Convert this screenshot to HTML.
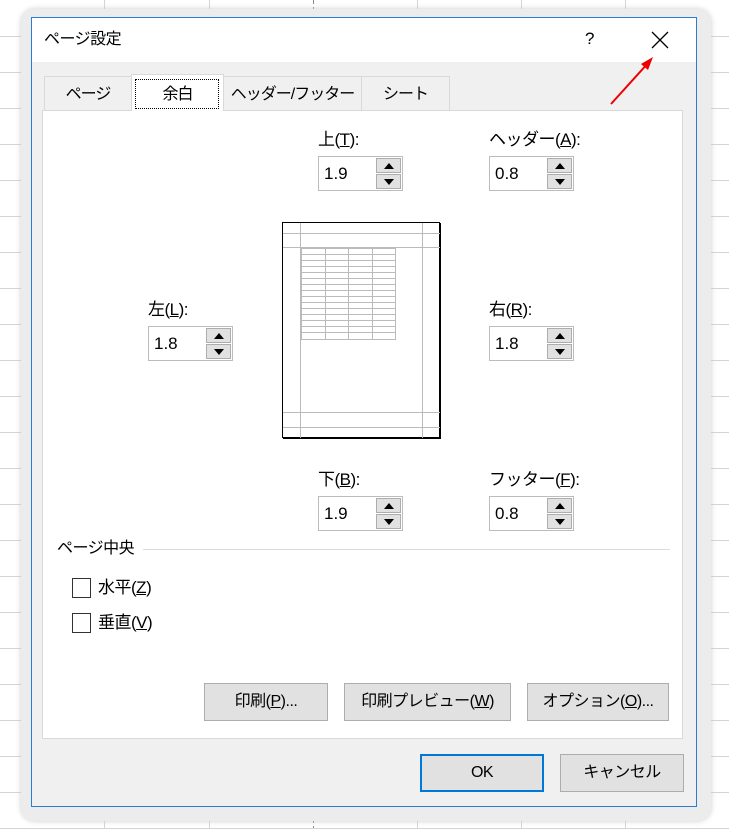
<!DOCTYPE html>
<html><head><meta charset="utf-8"><style>
*{margin:0;padding:0;box-sizing:border-box}
body{width:729px;height:829px;position:relative;overflow:hidden;background:#fff;font-family:"Liberation Sans","Noto Sans CJK JP",sans-serif;font-size:15px;color:#000}
.a{position:absolute}
.vl{position:absolute;top:0;width:1px;height:829px;background:#d4d4d4}
.hl{position:absolute;left:0;height:1px;width:729px;background:#d4d4d4}
.t{position:absolute;white-space:nowrap;line-height:1;letter-spacing:-0.5px}
.inp{position:absolute;width:85px;height:35px;border:1px solid #bcbcbc;background:#fff}
.inp span{position:absolute;left:5px;top:7px;font-size:17px}
.sp{position:absolute;right:1px;width:25px;height:15px;background:#e1e1e1;border:1px solid #adadad}
.sp.u{top:1px}.sp.d{bottom:1px}
.sp i{position:absolute;left:7px;width:0;height:0;border-left:5px solid transparent;border-right:5px solid transparent}
.sp.u i{top:4px;border-bottom:6px solid #000}
.sp.d i{top:4px;border-top:6px solid #000}
.btn{position:absolute;height:38px;background:#e1e1e1;border:1px solid #adadad;text-align:center;line-height:36px;font-size:16px;letter-spacing:-0.5px}
.tab{position:absolute;top:76px;height:34px;border:1px solid #d9d9d9;border-bottom:none;background:#f0f0f0;text-align:center;line-height:36px;font-size:16px;letter-spacing:-1px;white-space:nowrap}
u{text-decoration:underline}
.cb{position:absolute;width:19px;height:20px;border:1px solid #333;background:#fff}
</style></head><body>
<div class="vl" style="left:104px"></div><div class="vl" style="left:209px"></div>
<div class="vl" style="left:313px;background:repeating-linear-gradient(#888 0 4px,transparent 4px 7px)"></div>
<div class="vl" style="left:417px"></div><div class="vl" style="left:521px"></div><div class="vl" style="left:625px"></div>
<div class="hl" style="top:36px"></div><div class="hl" style="top:72px"></div><div class="hl" style="top:108px"></div><div class="hl" style="top:144px"></div><div class="hl" style="top:180px"></div><div class="hl" style="top:216px"></div><div class="hl" style="top:252px"></div><div class="hl" style="top:288px"></div><div class="hl" style="top:324px"></div><div class="hl" style="top:360px"></div><div class="hl" style="top:396px"></div><div class="hl" style="top:432px"></div><div class="hl" style="top:468px"></div><div class="hl" style="top:504px"></div><div class="hl" style="top:540px"></div><div class="hl" style="top:576px"></div><div class="hl" style="top:612px"></div><div class="hl" style="top:648px"></div><div class="hl" style="top:684px"></div><div class="hl" style="top:720px"></div><div class="hl" style="top:756px"></div><div class="hl" style="top:792px"></div><div class="hl" style="top:828px"></div>
<div class="a" style="left:21px;top:9px;width:690px;height:812px;background:#ececec;border-radius:14px;box-shadow:0 0 6px #ccc"></div>
<div class="a" style="left:31px;top:17px;width:666px;height:790px;background:#f0f0f0;border:1px solid #2b7cd3"></div>
<div class="a" style="left:32px;top:18px;width:664px;height:44px;background:#fff"></div>
<div class="t" style="left:44px;top:32px;font-size:16px">ページ設定</div>
<div class="t" style="left:585px;top:30px;font-size:17px">?</div>
<svg class="a" style="left:650px;top:30px" width="20" height="20"><path d="M2 2L18 18M18 2L2 18" stroke="#000" stroke-width="1.3"/></svg>
<svg class="a" style="left:605px;top:50px" width="55" height="60"><path d="M6 54L44 12" stroke="#e00" stroke-width="2"/><path d="M48 7L36 14L43 20Z" fill="#e00"/></svg>
<div class="a" style="left:42px;top:110px;width:641px;height:629px;background:#fff;border:1px solid #d9d9d9"></div>
<div class="tab" style="left:44px;width:88px">ページ</div>
<div class="tab" style="left:223px;width:139px">ヘッダー/フッター</div>
<div class="tab" style="left:361px;width:89px">シート</div>
<div class="tab" style="left:131px;top:74px;height:37px;width:93px;background:#fff;line-height:40px">余白</div>
<div class="a" style="left:135px;top:79px;width:84px;height:30px;border:1px dotted #000"></div>
<div class="t" style="left:318px;top:131px;font-size:17px">上(<u>T</u>):</div>
<div class="inp" style="left:318px;top:156px"><span>1.9</span><div class="sp u"><i></i></div><div class="sp d"><i></i></div></div>
<div class="t" style="left:489px;top:131px;font-size:17px">ヘッダー(<u>A</u>):</div>
<div class="inp" style="left:489px;top:156px"><span>0.8</span><div class="sp u"><i></i></div><div class="sp d"><i></i></div></div>
<div class="t" style="left:148px;top:301px;font-size:17px">左(<u>L</u>):</div>
<div class="inp" style="left:148px;top:326px"><span>1.8</span><div class="sp u"><i></i></div><div class="sp d"><i></i></div></div>
<div class="t" style="left:489px;top:301px;font-size:17px">右(<u>R</u>):</div>
<div class="inp" style="left:489px;top:326px"><span>1.8</span><div class="sp u"><i></i></div><div class="sp d"><i></i></div></div>
<div class="t" style="left:318px;top:471px;font-size:17px">下(<u>B</u>):</div>
<div class="inp" style="left:318px;top:496px"><span>1.9</span><div class="sp u"><i></i></div><div class="sp d"><i></i></div></div>
<div class="t" style="left:489px;top:471px;font-size:17px">フッター(<u>F</u>):</div>
<div class="inp" style="left:489px;top:496px"><span>0.8</span><div class="sp u"><i></i></div><div class="sp d"><i></i></div></div>
<svg class="a" style="left:280px;top:220px" width="164" height="222">
<rect x="2.5" y="2.5" width="157" height="215" fill="#fff" stroke="#000" stroke-width="1"/>
<path d="M160 3V218H3" stroke="#000" stroke-width="2" fill="none"/>
<g stroke="#bbb" stroke-width="1"><path d="M20.5 3V218M142.5 3V218M3 13.5H160M3 27.5H160M3 192.5H160M3 207.5H160"/>
<path d="M21 28.5H116M21 119.5H116M21.5 28V120M45.5 28V120M68.5 28V120M92.5 28V120M115.5 28V120"/>
<path d="M21 34.5H116M21 40.5H116M21 46.5H116M21 52.5H116M21 58.5H116M21 64.5H116M21 70.5H116M21 76.5H116M21 82.5H116M21 88.5H116M21 94.5H116M21 100.5H116M21 106.5H116M21 112.5H116"/></g>
</svg>
<div class="t" style="left:57px;top:541px;font-size:16px">ページ中央</div>
<div class="a" style="left:143px;top:549px;width:527px;height:1px;background:#dcdcdc"></div>
<div class="cb" style="left:72px;top:578px"></div><div class="t" style="left:98px;top:579px;font-size:17px">水平(<u>Z</u>)</div>
<div class="cb" style="left:72px;top:613px"></div><div class="t" style="left:98px;top:614px;font-size:17px">垂直(<u>V</u>)</div>
<div class="btn" style="left:204px;top:683px;width:124px">印刷(<u>P</u>)...</div>
<div class="btn" style="left:344px;top:683px;width:167px">印刷プレビュー(<u>W</u>)</div>
<div class="btn" style="left:527px;top:683px;width:142px">オプション(<u>O</u>)...</div>
<div class="btn" style="left:420px;top:754px;width:124px;border:2px solid #0078d7;line-height:34px">OK</div>
<div class="btn" style="left:560px;top:754px;width:124px">キャンセル</div>
</body></html>
